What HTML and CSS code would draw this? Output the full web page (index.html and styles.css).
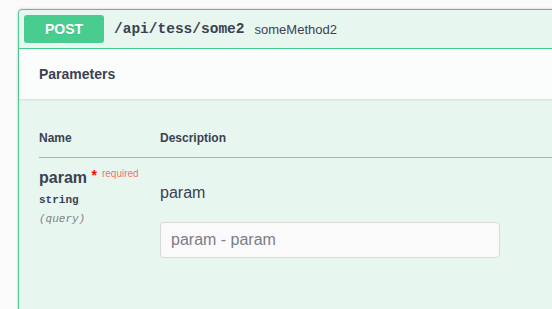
FILE: index.html
```html
<!DOCTYPE html>
<html>
<head>
    <title>someMethod2</title>
    <link rel="stylesheet" href="styles.css">
</head>
<body>

    <div class="opblock">
        <div class="opblock-summary">
            <span class="method">POST</span>
            <span class="path">/api/tess/some2</span>
            <span class="summary-desc">someMethod2</span>
        </div>

        <div class="section-header">
            <h4>Parameters</h4>
        </div>

        <div class="params-wrapper">
            <table class="params">
                <thead>
                    <tr>
                        <th class="col-name">Name</th>
                        <th>Description</th>
                    </tr>
                </thead>
                <tbody>
                    <tr>
                        <td class="col-name">
                            <div class="param-name">param <span class="star">*</span><span class="required">required</span></div>
                            <div class="param-type">string</div>
                            <div class="param-in">(query)</div>
                        </td>
                        <td>
                            <p class="param-desc">param</p>
                            <input type="text" class="param-input" placeholder="param - param">
                        </td>
                    </tr>
                </tbody>
            </table>
        </div>
    </div>

</body>
</html>
```

FILE: styles.css
```css
html, body {
    margin: 0;
    background-color: #fafafa;
    overflow: hidden;
}
body {
    padding: 9px 0 0 18px;
    font-family: "Liberation Sans", Arial, sans-serif;
    color: #3b4151;
}
.opblock {
    width: 620px;
    height: 400px;
    border: 1px solid #49cc90;
    border-radius: 4px;
    background-color: #e8f6f0;
    box-shadow: 0 0 3px rgba(0, 0, 0, 0.19);
}
.opblock-summary {
    display: flex;
    align-items: center;
    padding: 5px;
    border-bottom: 1px solid #49cc90;
}
.method {
    min-width: 80px;
    padding: 6px 0;
    text-align: center;
    font-size: 14px;
    font-weight: bold;
    line-height: 16px;
    color: white;
    background-color: #49cc90;
    border-radius: 3px;
    text-shadow: 0 1px 0 rgba(0, 0, 0, 0.1);
}
.path {
    margin-left: 10px;
    font-family: "Liberation Mono", monospace;
    font-size: 14.5px;
    font-weight: bold;
}
.summary-desc {
    margin-left: 10px;
    font-size: 13px;
}
.section-header {
    display: flex;
    align-items: center;
    min-height: 50px;
    padding: 0 20px;
    box-sizing: border-box;
    background-color: rgba(255, 255, 255, 0.8);
    box-shadow: 0 1px 2px rgba(0, 0, 0, 0.1);
}
.section-header h4 {
    margin: 0;
    font-size: 14px;
}
.params-wrapper {
    padding: 22px 20px 20px;
}
.params {
    width: 100%;
    border-collapse: collapse;
}
.params th {
    padding: 10px 0 12px;
    text-align: left;
    font-size: 12px;
    font-weight: bold;
    line-height: 14px;
    border-bottom: 1px solid rgba(59, 65, 81, 0.2);
}
.params td {
    padding: 11px 0 0;
    vertical-align: top;
}
.col-name {
    width: 121px;
}
.param-name {
    font-size: 16px;
    font-weight: bold;
    line-height: 18px;
}
.star {
    color: red;
    font-size: 14px;
    position: relative;
    top: -3px;
}
.required {
    color: rgba(255, 0, 0, 0.6);
    font-size: 10px;
    font-weight: normal;
    padding: 5px;
    position: relative;
    top: -6px;
}
.param-type {
    padding: 4px 0 5px;
    font-family: "Liberation Mono", monospace;
    font-size: 11px;
    font-weight: bold;
    line-height: 14px;
}
.param-in {
    font-family: "Liberation Mono", monospace;
    font-size: 11px;
    font-style: italic;
    line-height: 14px;
    color: #808080;
}
.param-desc {
    margin: 15px 0 20px;
    font-size: 16px;
    line-height: 18px;
}
.param-input {
    display: block;
    width: 340px;
    height: 36px;
    margin: 5px 0;
    padding: 8px 10px;
    box-sizing: border-box;
    font-family: "Liberation Sans", Arial, sans-serif;
    font-size: 16px;
    color: #3b4151;
    background-color: #fafafa;
    border: 1px solid #d9d9d9;
    border-radius: 4px;
}
.param-input::placeholder {
    color: #7a7d85;
}
```
